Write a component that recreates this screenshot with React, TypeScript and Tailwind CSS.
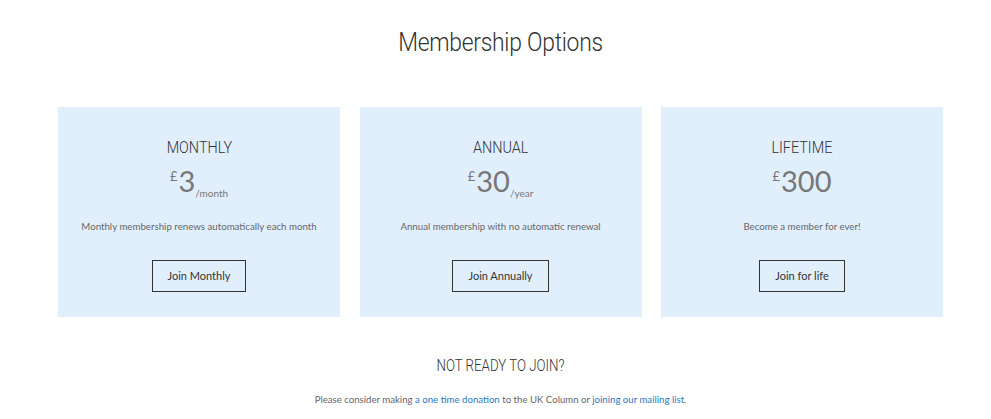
import React from "react";

const plans = [
  { name: "MONTHLY", price: "3", per: "/month", desc: "Monthly membership renews automatically each month", btn: "Join Monthly" },
  { name: "ANNUAL", price: "30", per: "/year", desc: "Annual membership with no automatic renewal", btn: "Join Annually" },
  { name: "LIFETIME", price: "300", per: "", desc: "Become a member for ever!", btn: "Join for life" },
];

export default function App() {
  return (
    <div className="w-[991px] h-[419px] bg-white overflow-hidden" style={{ fontFamily: "Lato, 'Noto Sans', sans-serif" }}>
      <div className="ml-[58px] w-[885px]">
        <h1 className="pt-[26px] text-center text-[26px] leading-[32px] font-light text-[#333] tracking-[-0.3px] [font-family:Roboto,sans-serif] scale-x-[0.88]">
          Membership Options
        </h1>
        <div className="mt-[49px] grid grid-cols-3 gap-x-[19.5px]">
          {plans.map((p) => (
            <div key={p.name} className="h-[210px] bg-[#e1effd] flex flex-col items-center">
              <div className="mt-[31px] text-[16px] leading-[20px] font-light text-[#333] [font-family:Roboto,sans-serif] scale-x-[0.9]">
                {p.name}
              </div>
              <div className="mt-[6px] flex items-start text-[#777] h-[36px]">
                <span className="text-[13px] leading-[13px] mt-[6px] mr-[1px]">£</span>
                <span className="text-[29px] leading-[34px]">{p.price}</span>
                {p.per && <span className="text-[10px] leading-[10px] self-end mb-[2px]">{p.per}</span>}
              </div>
              <p className="mt-[19px] text-[9.7px] leading-[14px] text-[#666]">{p.desc}</p>
              <button className="mt-[27px] h-[32px] px-[15px] border border-[#333] text-[11px] text-[#333] bg-transparent">
                {p.btn}
              </button>
            </div>
          ))}
        </div>
        <h2 className="mt-[39px] text-center text-[16px] leading-[20px] font-light text-[#333] [font-family:Roboto,sans-serif] scale-x-[0.83]">
          NOT READY TO JOIN?
        </h2>
        <p className="mt-[16px] text-center text-[9.65px] leading-[14px] text-[#666]">
          Please consider making <a className="text-[#2a77c0]">a one time donation</a> to the UK Column or{" "}
          <a className="text-[#2a77c0]">joining our mailing list</a>.
        </p>
      </div>
    </div>
  );
}
